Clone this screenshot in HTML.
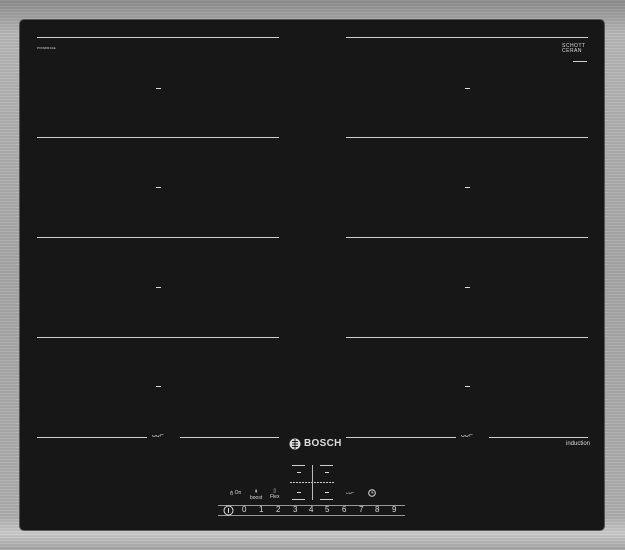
<!DOCTYPE html>
<html><head><style>
html,body{margin:0;padding:0;}
body{width:625px;height:550px;position:relative;overflow:hidden;font-family:"Liberation Sans",sans-serif;
background:linear-gradient(180deg,#8e8e8e 0%,#b9b9b9 6%,#a8a8a8 50%,#b0b0b0 94%,#cfcfcf 97%,#a5a5a5 100%);}
.frame{position:absolute;inset:0;background:repeating-linear-gradient(0deg,rgba(255,255,255,.06) 0 1px,rgba(0,0,0,.05) 1px 3px);}
.glass{position:absolute;left:20px;top:20px;width:584px;height:510px;background:#171717;border-radius:4px;box-shadow:0 0 0 1px #555;}
.l{position:absolute;height:1px;background:#cfcfcf;}
.d{position:absolute;width:5px;height:1px;background:#ddd;}
.t{position:absolute;color:#ddd;white-space:nowrap;}
</style></head><body>
<div class="frame"></div>
<div class="glass"></div>
<div class="l" style="left:37px;top:37px;width:242px"></div>
<div class="l" style="left:346px;top:37px;width:242px"></div>
<div class="l" style="left:37px;top:137px;width:242px"></div>
<div class="l" style="left:346px;top:137px;width:242px"></div>
<div class="l" style="left:37px;top:237px;width:242px"></div>
<div class="l" style="left:346px;top:237px;width:242px"></div>
<div class="l" style="left:37px;top:337px;width:242px"></div>
<div class="l" style="left:346px;top:337px;width:242px"></div>
<div class="l" style="left:37px;top:437px;width:110px"></div>
<div class="l" style="left:180px;top:437px;width:99px"></div>
<div class="l" style="left:346px;top:437px;width:110px"></div>
<div class="l" style="left:489px;top:437px;width:99px"></div>
<div class="t" style="left:152px;top:432px;font-size:7px">ᴗᴗ⌐</div>
<div class="t" style="left:461px;top:432px;font-size:7px">ᴗᴗ⌐</div>
<div class="d" style="left:156px;top:88px"></div><div class="d" style="left:465px;top:88px"></div>
<div class="d" style="left:156px;top:187px"></div><div class="d" style="left:465px;top:187px"></div>
<div class="d" style="left:156px;top:287px"></div><div class="d" style="left:465px;top:287px"></div>
<div class="d" style="left:156px;top:386px"></div><div class="d" style="left:465px;top:386px"></div>
<div class="t" style="left:37px;top:46px;font-size:3px">PXX645FC1E</div>
<div class="t" style="left:562px;top:44px;font-size:5px;line-height:5px;letter-spacing:.5px">SCHOTT<br>CERAN</div>
<div class="l" style="left:573px;top:61px;width:14px"></div>
<div class="t" style="left:566px;top:441px;font-size:6px">induction</div>
<svg style="position:absolute;left:289px;top:438px" width="12" height="12"><circle cx="6" cy="6" r="5.5" fill="#ddd"/><path d="M3 3.5h6M3 6h6M3 8.5h6M6 1v10" stroke="#171717" stroke-width="1" fill="none"/></svg>
<div class="t" style="left:304px;top:438px;font-size:10px;font-weight:bold;letter-spacing:.3px">BOSCH</div>
<div class="l" style="left:292px;top:465px;width:13px"></div><div class="l" style="left:320px;top:465px;width:13px"></div>
<div class="d" style="left:297px;top:472px;width:4px"></div><div class="d" style="left:325px;top:472px;width:4px"></div>
<div class="l" style="left:290px;top:482px;width:45px;background:repeating-linear-gradient(90deg,#ccc 0 2px,transparent 2px 3px)"></div>
<div style="position:absolute;left:312px;top:465px;width:1px;height:35px;background:#bbb"></div>
<div class="d" style="left:297px;top:492px;width:4px"></div><div class="d" style="left:325px;top:492px;width:4px"></div>
<div class="l" style="left:292px;top:499px;width:13px"></div><div class="l" style="left:320px;top:499px;width:13px"></div>
<div class="t" style="left:230px;top:490px;font-size:5px">ტ On</div>
<div class="t" style="left:250px;top:489px;font-size:5px;text-align:center">⇞<br>boost</div>
<div class="t" style="left:270px;top:488px;font-size:5px;text-align:center">▯<br>Flex</div>
<div class="t" style="left:346px;top:490px;font-size:5px">ᴗᴗ⌐</div>
<svg style="position:absolute;left:368px;top:489px" width="8" height="8"><circle cx="4" cy="4" r="3.3" stroke="#ddd" fill="none"/><path d="M4 2v2h1.5" stroke="#ddd" fill="none" stroke-width=".8"/></svg>
<div class="l" style="left:218px;top:505px;width:187px;background:#999"></div>
<div class="l" style="left:218px;top:515px;width:187px;background:#999"></div>
<svg style="position:absolute;left:223px;top:505px" width="11" height="11"><circle cx="5.5" cy="5.5" r="4.5" stroke="#ddd" fill="none"/><path d="M5.5 3v5" stroke="#ddd"/></svg>
<div class="t" style="left:242px;top:505px;font-size:8px">0</div>
<div class="t" style="left:259px;top:505px;font-size:8px">1</div>
<div class="t" style="left:276px;top:505px;font-size:8px">2</div>
<div class="t" style="left:293px;top:505px;font-size:8px">3</div>
<div class="t" style="left:309px;top:505px;font-size:8px">4</div>
<div class="t" style="left:325px;top:505px;font-size:8px">5</div>
<div class="t" style="left:342px;top:505px;font-size:8px">6</div>
<div class="t" style="left:359px;top:505px;font-size:8px">7</div>
<div class="t" style="left:375px;top:505px;font-size:8px">8</div>
<div class="t" style="left:392px;top:505px;font-size:8px">9</div>
</body></html>
